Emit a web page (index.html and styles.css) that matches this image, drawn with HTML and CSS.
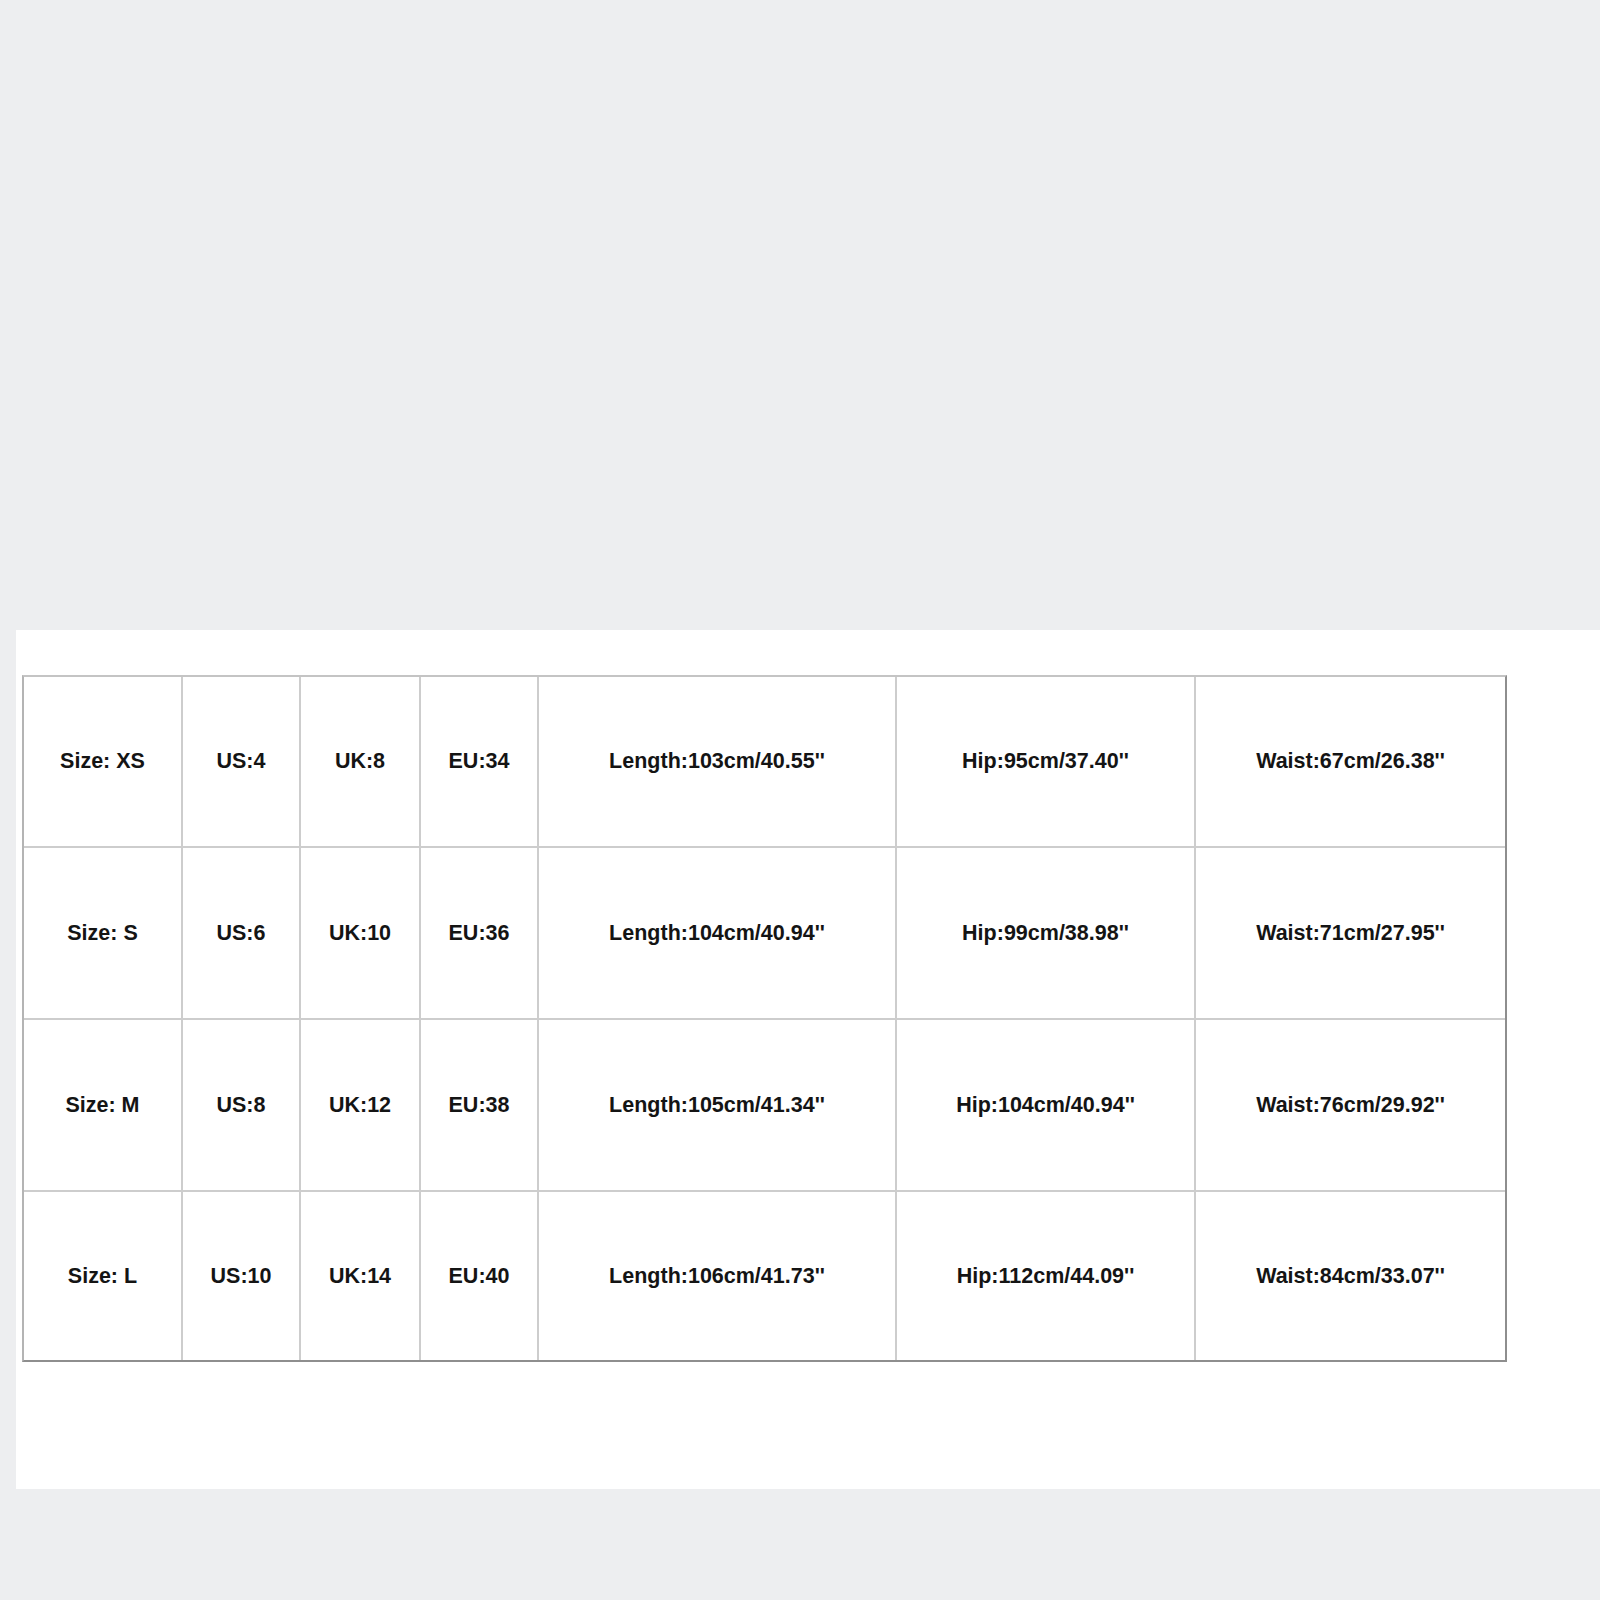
FILE: index.html
```html
<!DOCTYPE html>
<html lang="en">
<head>
<meta charset="utf-8">
<title>Size chart</title>
<link rel="stylesheet" href="styles.css">
</head>
<body>
<div class="top-space"></div>
<section class="panel">
  <table class="size-table">
    <colgroup>
      <col class="c1"><col class="c2"><col class="c3"><col class="c4"><col class="c5"><col class="c6"><col class="c7">
    </colgroup>
    <tbody>
      <tr class="r1">
        <td>Size: XS</td><td>US:4</td><td>UK:8</td><td>EU:34</td>
        <td>Length:103cm/40.55''</td><td>Hip:95cm/37.40''</td><td>Waist:67cm/26.38''</td>
      </tr>
      <tr class="r2">
        <td>Size: S</td><td>US:6</td><td>UK:10</td><td>EU:36</td>
        <td>Length:104cm/40.94''</td><td>Hip:99cm/38.98''</td><td>Waist:71cm/27.95''</td>
      </tr>
      <tr class="r3">
        <td>Size: M</td><td>US:8</td><td>UK:12</td><td>EU:38</td>
        <td>Length:105cm/41.34''</td><td>Hip:104cm/40.94''</td><td>Waist:76cm/29.92''</td>
      </tr>
      <tr class="r4">
        <td>Size: L</td><td>US:10</td><td>UK:14</td><td>EU:40</td>
        <td>Length:106cm/41.73''</td><td>Hip:112cm/44.09''</td><td>Waist:84cm/33.07''</td>
      </tr>
    </tbody>
  </table>
</section>
</body>
</html>
```
FILE: styles.css
```css
html, body {
  margin: 0;
  padding: 0;
  background: #edeef0;
}

.top-space {
  height: 630px;
}

.panel {
  margin-left: 16px;
  height: 859px;
  background: #ffffff;
  padding: 45px 0 0 6px;
  box-sizing: border-box;
}

.size-table {
  table-layout: fixed;
  border-collapse: separate;
  border-spacing: 0;
  width: 1485px;
  border-top: 2px solid #c4c4c4;
  border-left: 2px solid #b4b4b4;
  border-right: 2px solid #8e8e8e;
  border-bottom: 2px solid #8e8e8e;
  font-family: "Liberation Sans", Arial, sans-serif;
  font-weight: bold;
  font-size: 21.5px;
  color: #141414;
}

.c1 { width: 159px; }
.c2 { width: 118px; }
.c3 { width: 120px; }
.c4 { width: 118px; }
.c5 { width: 358px; }
.c6 { width: 299px; }
.c7 { width: 309px; }

.size-table td {
  box-sizing: border-box;
  padding: 0;
  text-align: center;
  vertical-align: middle;
  border-right: 2px solid #cdcdcd;
  border-bottom: 2px solid #cdcdcd;
  white-space: nowrap;
}

.size-table td:last-child {
  border-right: none;
}

.size-table tr:last-child td {
  border-bottom: none;
}

.r1 td { height: 171px; }
.r2 td { height: 172px; }
.r3 td { height: 172px; }
.r4 td { height: 168px; }
```
